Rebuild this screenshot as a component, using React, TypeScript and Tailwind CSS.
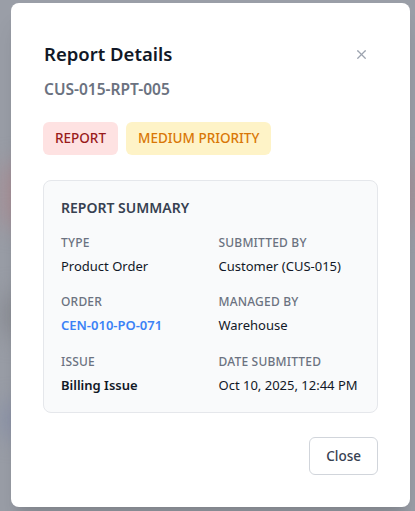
import { X } from "lucide-react";

const fields = [
  { label: "Type", value: "Product Order", cls: "text-[#111827]" },
  { label: "Submitted By", value: "Customer (CUS-015)", cls: "text-[#111827]" },
  { label: "Order", value: "CEN-010-PO-071", cls: "text-[#3b82f6] font-semibold" },
  { label: "Managed By", value: "Warehouse", cls: "text-[#111827]" },
  { label: "Issue", value: "Billing Issue", cls: "text-[#111827] font-semibold" },
  { label: "Date Submitted", value: "Oct 10, 2025, 12:44 PM", cls: "text-[#111827]" },
];

const App = () => {
  return (
    <div
      className="relative h-[511px] w-[415px] overflow-hidden bg-[#9a9ea7]"
      style={{ fontFamily: '"Noto Sans", "Open Sans", sans-serif' }}
    >
      {/* blurred page behind the overlay */}
      <div className="absolute left-0 top-[165px] h-[60px] w-full bg-[#a88f96] blur-md" />
      <div className="absolute left-0 top-[295px] h-[40px] w-[30px] bg-[#8a8d94] blur-md" />
      <div className="absolute left-0 top-[405px] h-[30px] w-[30px] bg-[#8890a8] blur-md" />

      <div className="relative ml-[11px] mt-[3px] flex h-[504px] w-[399px] flex-col rounded-lg bg-white px-8 pt-[37px] shadow-xl">
        <div className="flex items-start justify-between">
          <h2 className="ml-px text-[18.5px] font-semibold leading-7 text-[#111827]">
            Report Details
          </h2>
          <button className="mr-[9px] mt-[7px] text-[#9ca3af]">
            <X size={15} strokeWidth={2} />
          </button>
        </div>
        <p className="ml-px mt-[10px] text-[15.5px] font-semibold text-[#6b7280]">
          CUS-015-RPT-005
        </p>

        <div className="mt-[21px] flex gap-2">
          <span className="rounded-md bg-[#fee2e2] px-3 py-[6px] text-[13.5px] font-medium text-[#991b1b]">
            REPORT
          </span>
          <span className="rounded-md bg-[#fef3c7] px-3 py-[6px] text-[13.5px] font-medium text-[#d97706]">
            MEDIUM PRIORITY
          </span>
        </div>

        <div className="mt-[25px] rounded-lg border border-[#e5e7eb] bg-[#f9fafb] px-[17px] pb-[17px] pt-[17px]">
          <h3 className="text-sm font-semibold text-[#374151]">REPORT SUMMARY</h3>
          <div className="mt-[17px] grid grid-cols-2 gap-x-4 gap-y-[18px]">
            {fields.map((f) => (
              <div key={f.label}>
                <div className="text-xs font-medium uppercase tracking-[0.2px] text-[#6b7280]">
                  {f.label}
                </div>
                <div className={`mt-[6px] whitespace-nowrap text-[13px] ${f.cls}`}>
                  {f.value}
                </div>
              </div>
            ))}
          </div>
        </div>

        <div className="mt-[24px] flex justify-end">
          <button className="h-[38px] rounded-md border border-[#d1d5db] bg-white px-4 text-[13.5px] font-medium text-[#374151]">
            Close
          </button>
        </div>
      </div>
    </div>
  );
};

export default App;
